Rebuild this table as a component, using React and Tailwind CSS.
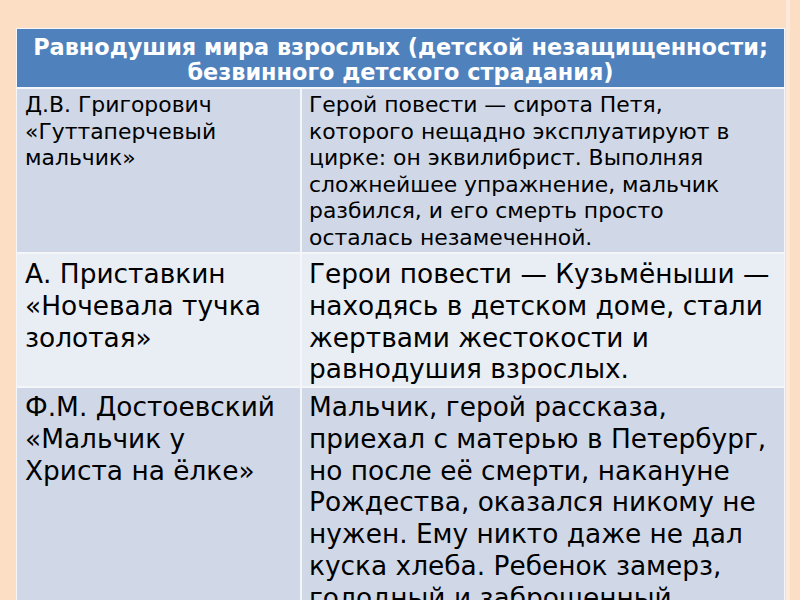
const rows = [
  {
    left: ["Д.В. Григорович", "«Гуттаперчевый", "мальчик»"],
    right: [
      "Герой повести — сирота Петя,",
      "которого нещадно эксплуатируют в",
      "цирке: он эквилибрист. Выполняя",
      "сложнейшее упражнение, мальчик",
      "разбился, и его смерть просто",
      "осталась незамеченной.",
    ],
    bg: "bg-[#d0d8e8]",
    text: "text-[21.9px] leading-[26.6px] pt-[3px]",
    h: "h-[163px]",
  },
  {
    left: ["А. Приставкин", "«Ночевала тучка", "золотая»"],
    right: [
      "Герои повести — Кузьмёныши —",
      "находясь в детском доме, стали",
      "жертвами жестокости и",
      "равнодушия взрослых.",
    ],
    bg: "bg-[#e9edf4]",
    text: "text-[26.4px] leading-[31.8px] pt-[4px]",
    h: "h-[132px]",
  },
  {
    left: ["Ф.М. Достоевский", "«Мальчик у", "Христа на ёлке»"],
    right: [
      "Мальчик, герой рассказа,",
      "приехал с матерью в Петербург,",
      "но после её смерти, накануне",
      "Рождества, оказался никому не",
      "нужен. Ему никто даже не дал",
      "куска хлеба. Ребенок замерз,",
      "голодный и заброшенный.",
    ],
    bg: "bg-[#d0d8e8]",
    text: "text-[26.4px] leading-[31.8px] pt-[3px]",
    h: "h-[260px]",
  },
];

function Lines({ lines }) {
  return lines.map((l, i) => (
    <div key={i} className="whitespace-nowrap">
      {l}
    </div>
  ));
}

export default function App() {
  return (
    <div
      className="w-[800px] h-[600px] overflow-hidden bg-[#fcdec4] flex"
      style={{ fontFamily: '"DejaVu Sans", sans-serif' }}
    >
      <div className="ml-[16px] mt-[28px] w-[769px] shrink-0 bg-[#f4f6fa] p-px flex flex-col gap-[2px] text-black">
        <div className="h-[58px] shrink-0 bg-[#4f81bd] text-white font-bold text-[22.4px] leading-[25px] pt-[3px] flex flex-col items-center justify-center">
          <div className="whitespace-nowrap">Равнодушия мира взрослых (детской незащищенности;</div>
          <div className="whitespace-nowrap">безвинного детского страдания)</div>
        </div>
        {rows.map((r, i) => (
          <div key={i} className={`grid grid-cols-[283px_1fr] gap-[2px] ${r.h} shrink-0`}>
            <div className={`${r.bg} ${r.text} pl-[8px] overflow-hidden`}>
              <Lines lines={r.left} />
            </div>
            <div className={`${r.bg} ${r.text} pl-[7px] overflow-hidden`}>
              <Lines lines={r.right} />
            </div>
          </div>
        ))}
      </div>
      <div className="ml-[1px] w-[4px] h-full shrink-0 bg-[#fdeadb]" />
    </div>
  );
}
